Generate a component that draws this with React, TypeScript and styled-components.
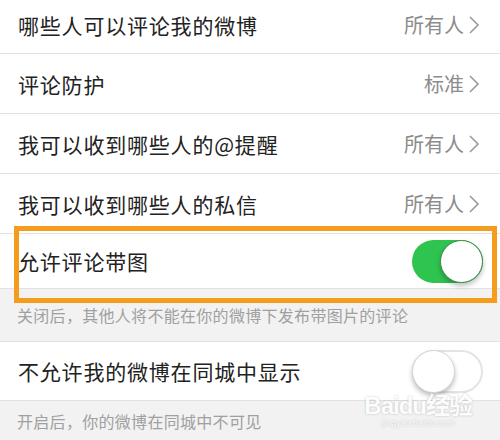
import React from 'react'
import styled, { createGlobalStyle, css } from 'styled-components'

const GlobalStyle = createGlobalStyle`
  html, body {
    margin: 0;
    padding: 0;
    background: #f2f2f2;
  }
  body {
    font-family: 'Noto Sans CJK SC', 'Noto Sans', sans-serif;
  }
`

const Page = styled.div`
  position: relative;
  width: 500px;
  height: 440px;
  overflow: hidden;
  background: #f2f2f2;
`

const Row = styled.div<{ height?: number; padBottom?: number; padRight?: number }>`
  position: relative;
  display: flex;
  align-items: center;
  justify-content: space-between;
  box-sizing: border-box;
  height: ${(p) => p.height ?? 60}px;
  padding: 0 ${(p) => p.padRight ?? 20}px ${(p) => p.padBottom ?? 0}px 18px;
  background: #fff;
  border-bottom: 1px solid #e2e2e2;
`

const Label = styled.span`
  font-size: 21px;
  color: #222;
  letter-spacing: 0.8px;
`

const Value = styled.span`
  display: flex;
  align-items: center;
  gap: 4px;
  font-size: 20px;
  color: #8c8c8c;
`

const Chevron = () => (
  <svg width="12" height="20" viewBox="0 0 12 20">
    <path d="M2 2 L10 10 L2 18" fill="none" stroke="#9a9a9a" strokeWidth="1.6" />
  </svg>
)

const Hint = styled.div<{ height: number; top?: boolean }>`
  display: flex;
  align-items: center;
  box-sizing: border-box;
  height: ${(p) => p.height}px;
  padding-left: 17px;
  font-size: 16px;
  letter-spacing: 0.3px;
  color: #a0a0a0;
  background: #f2f2f2;
  ${(p) =>
    p.top &&
    css`
      border-bottom: 1px solid #e2e2e2;
    `}
`

const Track = styled.div<{ on: boolean }>`
  position: relative;
  width: 71px;
  height: 43px;
  box-sizing: border-box;
  border-radius: 22px;
  ${(p) =>
    p.on
      ? css`
          background: #2fc44f;
        `
      : css`
          background: #fff;
          border: 2px solid #e4e4e4;
        `}
`

const Knob = styled.div<{ on: boolean }>`
  position: absolute;
  top: ${(p) => (p.on ? 0 : -2)}px;
  left: ${(p) => (p.on ? 28 : -2)}px;
  width: 43px;
  height: 43px;
  box-sizing: border-box;
  border-radius: 50%;
  background: #fff;
  border: 1px solid ${(p) => (p.on ? '#3a8a48' : '#d6d6d6')};
  box-shadow: 0 3px 5px rgba(0, 0, 0, 0.25);
`

const Toggle: React.FC<{ on: boolean }> = ({ on }) => (
  <Track on={on}>
    <Knob on={on} />
  </Track>
)

const Highlight = styled.div`
  position: absolute;
  left: 14px;
  right: 3px;
  top: -8px;
  bottom: -15px;
  border: 5px solid #f39c1e;
  pointer-events: none;
`

const Watermark = styled.div`
  position: absolute;
  right: 28px;
  bottom: 12px;
  display: flex;
  flex-direction: column;
  align-items: center;
  color: #fff;
  font-family: 'Liberation Sans', 'Noto Sans CJK SC', sans-serif;
  text-shadow: 0 0 2px rgba(0, 0, 0, 0.3);
  opacity: 0.8;
`

const MarkTitle = styled.span`
  font-size: 24px;
  font-weight: bold;
  letter-spacing: -1px;
`

const MarkSub = styled.span`
  font-size: 9px;
  margin-top: -3px;
`

const links = [
  { label: '哪些人可以评论我的微博', value: '所有人' },
  { label: '评论防护', value: '标准' },
  { label: '我可以收到哪些人的@提醒', value: '所有人' },
  { label: '我可以收到哪些人的私信', value: '所有人' },
]

export default function App() {
  return (
    <Page>
      <GlobalStyle />
      {links.map((l, i) => (
        <Row key={l.label} height={i === 0 ? 54 : 60} padBottom={i === 0 ? 4 : 0}>
          <Label>{l.label}</Label>
          <Value>
            {l.value}
            <Chevron />
          </Value>
        </Row>
      ))}
      <Row height={55} padRight={17}>
        <Label>允许评论带图</Label>
        <Toggle on />
        <Highlight />
      </Row>
      <Hint height={53} top>
        关闭后，其他人将不能在你的微博下发布带图片的评论
      </Hint>
      <Row height={59} padRight={17}>
        <Label>不允许我的微博在同城中显示</Label>
        <Toggle on={false} />
      </Row>
      <Hint height={40}>开启后，你的微博在同城中不可见</Hint>
      <Watermark>
        <MarkTitle>Baidu经验</MarkTitle>
        <MarkSub>jingyan.baidu.com</MarkSub>
      </Watermark>
    </Page>
  )
}
